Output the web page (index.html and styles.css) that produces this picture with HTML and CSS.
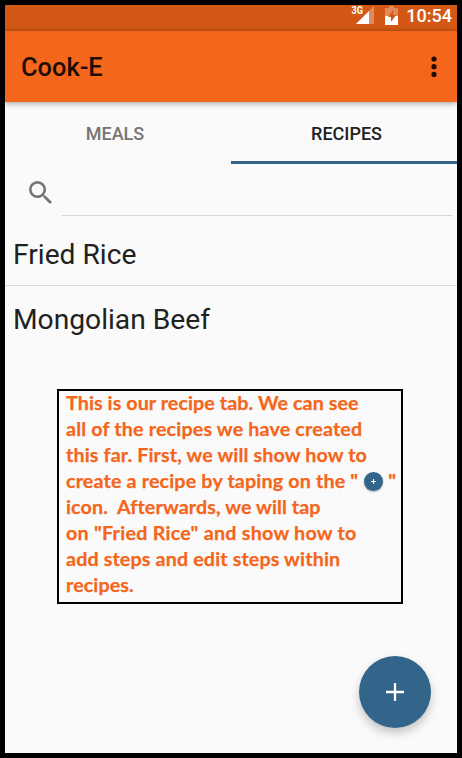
FILE: index.html
```html
<!DOCTYPE html>
<html lang="en">
<head>
<meta charset="utf-8">
<title>Cook-E</title>
<link rel="stylesheet" href="styles.css">
</head>
<body>
<div class="screen">
  <div class="status">
    <svg class="signal" width="24" height="20" viewBox="0 0 24 20">
      <path d="M23 1V19H5Z" fill="#fff" fill-opacity=".3"/>
      <path d="M18 6V19H5Z" fill="#fff"/>
      <text x="0.5" y="9.3" class="net" textLength="11.5" lengthAdjust="spacingAndGlyphs">3G</text>
    </svg>
    <svg class="battery" width="13" height="19" viewBox="0 0 13 19">
      <path d="M4 0h5v2h4v8H0V2h4z" fill="#fff" fill-opacity=".3"/>
      <path d="M0 10h13v9H0z" fill="#fff"/>
      <path d="M8.5 4 3 11h3v5l5-7H8z" fill="#d45815"/>
    </svg>
    <span class="time">10:54</span>
  </div>
  <header class="toolbar">
    <h1>Cook-E</h1>
    <svg width="6" height="22" viewBox="0 0 6 22" fill="#1f0d04"><circle cx="3" cy="3" r="2.6"/><circle cx="3" cy="10.7" r="2.6"/><circle cx="3" cy="18.4" r="2.6"/></svg>
  </header>
  <nav class="tabs">
    <div class="tab">MEALS</div>
    <div class="tab active">RECIPES</div>
  </nav>
  <div class="search">
    <svg width="23" height="23" viewBox="3 3 17.5 17.5" fill="#757575"><path d="M15.5 14h-.79l-.28-.27A6.47 6.47 0 0 0 16 9.5 6.5 6.5 0 1 0 9.5 16c1.61 0 3.09-.59 4.23-1.57l.27.28v.79l5 4.99L20.49 19l-4.99-5zm-6 0C7.01 14 5 11.99 5 9.5S7.01 5 9.5 5 14 7.01 14 9.5 11.99 14 9.5 14z"/></svg>
    <div class="field"></div>
  </div>
  <div class="row">Fried Rice</div>
  <div class="row last">Mongolian Beef</div>
  <div class="note">
    <div class="l1">This is our recipe tab. We can see</div>
    <div class="l2">all of the recipes we have created</div>
    <div class="l3">this far. First, we will show how to</div>
    <div class="l4">create a recipe by taping on the "<span class="mini"><svg width="7" height="7" viewBox="0 0 7 7"><path d="M3.5 1v5M1 3.5h5" stroke="#fff"/></svg></span>"</div>
    <div class="l5">icon.&nbsp; Afterwards, we will tap</div>
    <div class="l6">on "Fried Rice" and show how to</div>
    <div class="l7">add steps and edit steps within</div>
    <div class="l8">recipes.</div>
  </div>
  <div class="fab"><svg width="18" height="18" viewBox="0 0 18 18"><path d="M9 0v18M0 9h18" stroke="#fff" stroke-width="2.3"/></svg></div>
</div>
</body>
</html>
```
FILE: styles.css
```css
* { box-sizing: border-box; }
body { margin: 0; background: #000; font-family: Roboto, "Liberation Sans", sans-serif; }
.screen { position: relative; width: 462px; height: 758px; border: 5px solid #000; background: #fafafa; overflow: hidden; }
.status { height: 26px; background: #d45815; display: flex; align-items: flex-start; padding-right: 5px; justify-content: flex-end; color: #fff; }
.signal { margin-right: 10px; }
.net { font: 700 10.5px Roboto, sans-serif; fill: #fff; }
.battery { margin-top: 1px; margin-right: 8px; }
.time { font-size: 18px; font-weight: 500; line-height: 22px; }
.toolbar { position: relative; height: 71px; background: #f4661b; display: flex; align-items: center; justify-content: space-between; padding: 0 20px 0 16px; box-shadow: 0 1px 6px rgba(0,0,0,.4); }
h1 { margin: 1px 0 0; font-size: 25.4px; font-weight: 500; color: #1f0d04; }
.tabs { display: grid; grid-template-columns: 226px 226px; height: 62px; }
.tab { display: flex; align-items: center; justify-content: center; padding: 4px 6px 0 0; font-size: 18px; font-weight: 500; color: #757575; border-bottom: 3px solid transparent; }
.active { padding: 4px 0 0 5px; color: #212121; border-bottom-color: #33658a; }
.search { display: flex; height: 52px; padding: 0 5px 0 24px; }
.search svg { margin-top: 17px; margin-right: 10px; }
.field { flex: 1; border-bottom: 1px solid #d5d5d5; }
.row { height: 70px; padding: 22px 8px 0; font-size: 28.2px; line-height: 34px; color: #212121; border-bottom: 1px solid #d9d9d9; }
.last { height: 66px; padding-top: 17px; border: 0; }
.note { width: 346px; height: 215px; margin: 37px 0 0 52px; border: 2px solid #000; padding: 0 7px; font: 700 19.7px/26px Lato, sans-serif; color: #f4661b; white-space: nowrap; -webkit-text-stroke: .25px #f4661b; }
.note > div { height: 26px; position: relative; top: -1px; }
.l1 { letter-spacing: .08px; }
.l2 { letter-spacing: .17px; }
.l3 { letter-spacing: .13px; }
.l4 { display: flex; letter-spacing: .16px; }
.l5, .l8 { letter-spacing: .1px; }
.l6 { letter-spacing: .25px; }
.l7 { letter-spacing: .14px; }
.mini { display: flex; flex-shrink: 0; width: 19px; height: 19px; margin: 4px 5px 0 6px; border-radius: 50%; background: #33658a; align-items: center; justify-content: center; box-shadow: 0 1px 2px rgba(0,0,0,.3); }
.fab { position: absolute; left: 354px; top: 651px; width: 72px; height: 72px; border-radius: 50%; background: #33658a; display: flex; align-items: center; justify-content: center; box-shadow: 0 5px 10px rgba(0,0,0,.22); }
```
